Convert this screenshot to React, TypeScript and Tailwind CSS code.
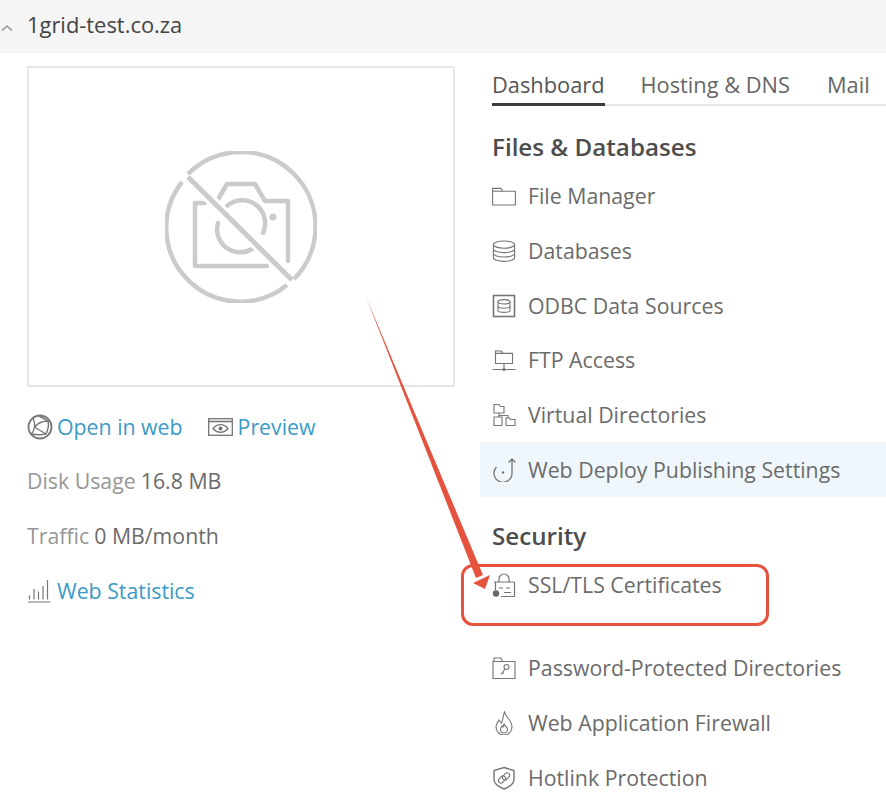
const Ic = ({ children, className = "" }: { children: React.ReactNode; className?: string }) => (
  <svg viewBox="0 0 24 24" fill="none" stroke="#757575" strokeWidth="1.1" className={`w-6 h-6 shrink-0 ${className}`}>
    {children}
  </svg>
);

const FolderIcon = () => (
  <Ic>
    <path d="M.6 21V4.400h8.400l1.600 2.800h12.800V21z" />
    <path d="M.6 7.200h10" />
  </Ic>
);
const DbIcon = () => (
  <Ic>
    <ellipse cx="12" cy="5.600" rx="10.600" ry="3.600" />
    <path d="M1.400 5.600v13.200c0 2 4.700 3.600 10.600 3.600s10.600-1.600 10.600-3.600V5.600M1.400 10c0 2 4.700 3.600 10.600 3.600s10.600-1.600 10.600-3.600M1.400 14.400c0 2 4.700 3.600 10.600 3.600s10.600-1.600 10.600-3.600" />
  </Ic>
);
const OdbcIcon = () => (
  <Ic>
    <rect x="1.500" y="1.500" width="21" height="21" strokeWidth="1.600" />
    <ellipse cx="12" cy="7.800" rx="6" ry="2.200" />
    <path d="M6 7.800v8.400c0 1.200 2.700 2.200 6 2.200s6-1 6-2.200V7.800M6 12c0 1.200 2.700 2.200 6 2.200s6-1 6-2.200" />
  </Ic>
);
const FtpIcon = () => (
  <Ic>
    <path d="M3.500 15.500V3h6l1.400 2.400h9.600v10.100zM3.500 5.400h7.400M12 15.500v5.500M.5 21.500h23" />
    <circle cx="12" cy="21.500" r="1" fill="#757575" />
  </Ic>
);
const VdirIcon = () => (
  <Ic>
    <path d="M2 10V1.500h5l1.200 2h3.800V10zM7 10v4M2 22.500V14h8v8.500zM14 22.500V15h3.500l1 1.500H23v6zM7 12.500h9V15" />
  </Ic>
);
const DeployIcon = () => (
  <Ic>
    <path d="M4.500 9A9 9 0 1 0 20 15V1M16.500 4.500 20 1l3.500 3.500" strokeWidth="1.300" />
    <circle cx="11" cy="14.500" r="1.200" fill="#757575" stroke="none" />
  </Ic>
);
const SslIcon = () => (
  <Ic>
    <path d="M7 9V6a5 5 0 0 1 10 0v3M2 9h20.500M3.500 9v8M22.500 9v14.500H9M7 15h4M14 15h4M12 19.500h7" strokeWidth="1.200" />
    <circle cx="4" cy="20.500" r="3.200" fill="#666" stroke="none" />
  </Ic>
);
const PassIcon = () => (
  <Ic>
    <path d="M1 22.500V5.500h1V2h7l1.500 3.500H23v17zM2 5.500h8.500" />
    <circle cx="14.500" cy="11" r="2.500" />
    <path d="M13 13l-4 5.500M10.500 16.500l1.500 1" />
  </Ic>
);
const FireIcon = () => (
  <Ic>
    <path d="M12.500 1C13.500 6 20 9 20 16a8 8 0 0 1-16 0c0-3.500 2-5 3-7 1 1.500 1.500 2.500 2.500 3C11 9 11 5 12.500 1z" />
    <path d="M12 13c.5 2 3.500 3 3.500 5.500a3.500 3.500 0 0 1-7 0c0-1.500 1-2.500 1.500-3.500.5.500 1 1 1 1 .5-1 .5-2 1-3z" />
  </Ic>
);
const HotlinkIcon = () => (
  <Ic>
    <path d="M12 1.500 22 4.500v9c0 4.500-5 7.500-10 9.500-5-2-10-5-10-9.500v-9z" strokeWidth="1.400" />
    <rect x="6" y="11" width="8" height="5" rx="2.500" transform="rotate(-45 10 13.500)" />
    <rect x="10" y="8" width="8" height="5" rx="2.500" transform="rotate(-45 14 10.500)" />
  </Ic>
);

const GlobeIcon = () => (
  <svg viewBox="0 0 26 26" fill="none" stroke="#757575" strokeWidth="1.400" className="w-[26px] h-[26px] shrink-0">
    <circle cx="13" cy="13" r="11.500" strokeWidth="1.800" />
    <path d="M6 4c1.500 3 2 6 1.500 9-.5 3-1.500 5-3 7M7.500 13c4 2.500 8 5 11.500 7M7.500 13C11 9 15 7 21 7c1 4 0 9-2 13M12 2c3 1.500 6 3 9 5M4.500 20c5 1 10 1 14.500 0" />
  </svg>
);
const PreviewIcon = () => (
  <svg viewBox="0 0 25 18" fill="none" stroke="#757575" strokeWidth="1.300" className="w-[25px] h-[18px] shrink-0">
    <rect x=".7" y=".7" width="23.600" height="16.600" />
    <path d="M.7 3.500h23.600" strokeWidth="1.600" />
    <path d="M5 10.500c2-2.500 4.500-3.800 7.500-3.800s5.500 1.300 7.500 3.800c-2 2.500-4.500 3.800-7.500 3.800S7 13 5 10.500z" />
    <circle cx="12.500" cy="10.500" r="2" fill="#757575" stroke="none" />
  </svg>
);
const StatsIcon = () => (
  <svg viewBox="0 0 24 24" fill="none" stroke="#757575" strokeWidth="1.200" className="w-6 h-6 shrink-0">
    <path d="M1 23h22.500M2.500 20.500v-4M7 20.500V10M11.500 20.500v-8M16 20.500V7M20.500 20.500V1" />
  </svg>
);

const NoPhotoIcon = () => (
  <svg viewBox="0 0 152 152" fill="none" stroke="#cbcbcb" className="w-[152px] h-[152px]">
    <path d="M17 31A74 74 0 0 0 122 134M23 23A74 74 0 0 1 129 128" strokeWidth="4.500" />
    <path d="M40 52H30v63h72M52 50l10-17h28l10 17h23v60" strokeWidth="4.500" strokeLinejoin="round" strokeLinecap="round" />
    <path d="M53 72a23 23 0 0 0 34 26M62 55a23 23 0 0 1 36 27" strokeWidth="4.500" strokeLinecap="round" />
    <circle cx="108" cy="66" r="3.500" fill="#cbcbcb" stroke="none" />
    <path d="M30 33 120 122" stroke="#ffffff" strokeWidth="11" />
    <path d="M23 26 127 129" strokeWidth="5" />
  </svg>
);

const links = [
  { icon: <FolderIcon />, label: "File Manager" },
  { icon: <DbIcon />, label: "Databases" },
  { icon: <OdbcIcon />, label: "ODBC Data Sources" },
  { icon: <FtpIcon />, label: "FTP Access" },
  { icon: <VdirIcon />, label: "Virtual Directories" },
];

const Row = ({ icon, label, className = "" }: { icon: React.ReactNode; label: string; className?: string }) => (
  <div className={`flex items-center gap-[12px] h-[54.700px] pl-3 ${className}`}>
    {icon}
    <span>{label}</span>
  </div>
);

const App = () => {
  return (
    <div className="relative w-[886px] h-[799px] overflow-hidden bg-white text-[21.3px] text-[#6b6b6b] font-['Open_Sans',sans-serif]">
      <div className="h-[53px] bg-[#f5f5f5] flex items-center text-[#444] pb-[3px]">
        <svg viewBox="0 0 12 8" fill="none" stroke="#888" strokeWidth="1.200" className="w-3 h-2 ml-[1px] mt-[5px]">
          <path d="M1 6.500 6 2l5 4.500" />
        </svg>
        <span className="ml-[14px] text-[21.900px]">1grid-test.co.za</span>
      </div>

      <div className="flex">
        <div className="w-[480px] pl-[27px] shrink-0">
          <div className="mt-[13px] w-[428px] h-[321px] border-2 border-[#e6e6e6] flex items-center justify-center">
            <NoPhotoIcon />
          </div>
          <div className="mt-[26px] flex items-center h-[27px] text-[#3a9bc6]">
            <GlobeIcon />
            <span className="ml-[4px]">Open in web</span>
            <span className="ml-[25px]"><PreviewIcon /></span>
            <span className="ml-[5px]">Preview</span>
          </div>
          <div className="mt-[27px] h-[27px] flex items-center">
            <span className="text-[#969696]">Disk Usage</span>
            <span className="ml-[5px]">16.8 MB</span>
          </div>
          <div className="mt-[28px] h-[27px] flex items-center">
            <span className="text-[#969696]">Traffic</span>
            <span className="ml-[5px]">0 MB/month</span>
          </div>
          <div className="mt-[28px] h-[27px] flex items-center text-[#3a9bc6]">
            <StatsIcon />
            <span className="ml-[6px]">Web Statistics</span>
          </div>
        </div>

        <div className="flex-1 min-w-0">
          <div className="mt-[12px] ml-3 h-[41px] flex border-b-2 border-[#e6e6e6] text-[#666] text-[21.800px]">
            <div className="h-[41px] border-b-[3px] border-[#3c3c3c] text-[#555] flex items-center pt-[2px]">Dashboard</div>
            <div className="ml-[36px] flex items-center pt-[2px]">Hosting &amp; DNS</div>
            <div className="ml-[37px] flex items-center pt-[2px]">Mail</div>
          </div>
          <h2 className="ml-3 mt-[23px] text-[24.200px] leading-[36px] font-semibold text-[#4d4d4d]">Files &amp; Databases</h2>
          <div className="mt-[4px]">
            {links.map((l) => (
              <Row key={l.label} icon={l.icon} label={l.label} />
            ))}
            <Row icon={<DeployIcon />} label="Web Deploy Publishing Settings" className="bg-[#eff7fc]" />
          </div>
          <h2 className="ml-3 mt-[20.800px] text-[24.200px] leading-[36px] font-semibold text-[#4d4d4d]">Security</h2>
          <Row icon={<SslIcon />} label="SSL/TLS Certificates" className="mt-[7px] !h-[48px]" />
          <div className="mt-[32px]">
            <Row icon={<PassIcon />} label="Password-Protected Directories" />
            <Row icon={<FireIcon />} label="Web Application Firewall" />
            <Row icon={<HotlinkIcon />} label="Hotlink Protection" />
          </div>
        </div>
      </div>

      {/* annotation: red box and arrow drawn over the page */}
      <div className="absolute left-[461px] top-[564px] w-[308px] h-[62px] border-[3px] border-[#e5533f] rounded-[12px]" />
      <svg viewBox="0 0 886 799" className="absolute inset-0 w-[886px] h-[799px] pointer-events-none">
        <polygon points="366,297 476,578 483,575" fill="#e5533f" />
        <polygon points="473,583 485,589 490,575" fill="#e5533f" />
      </svg>
    </div>
  );
};

export default App;
